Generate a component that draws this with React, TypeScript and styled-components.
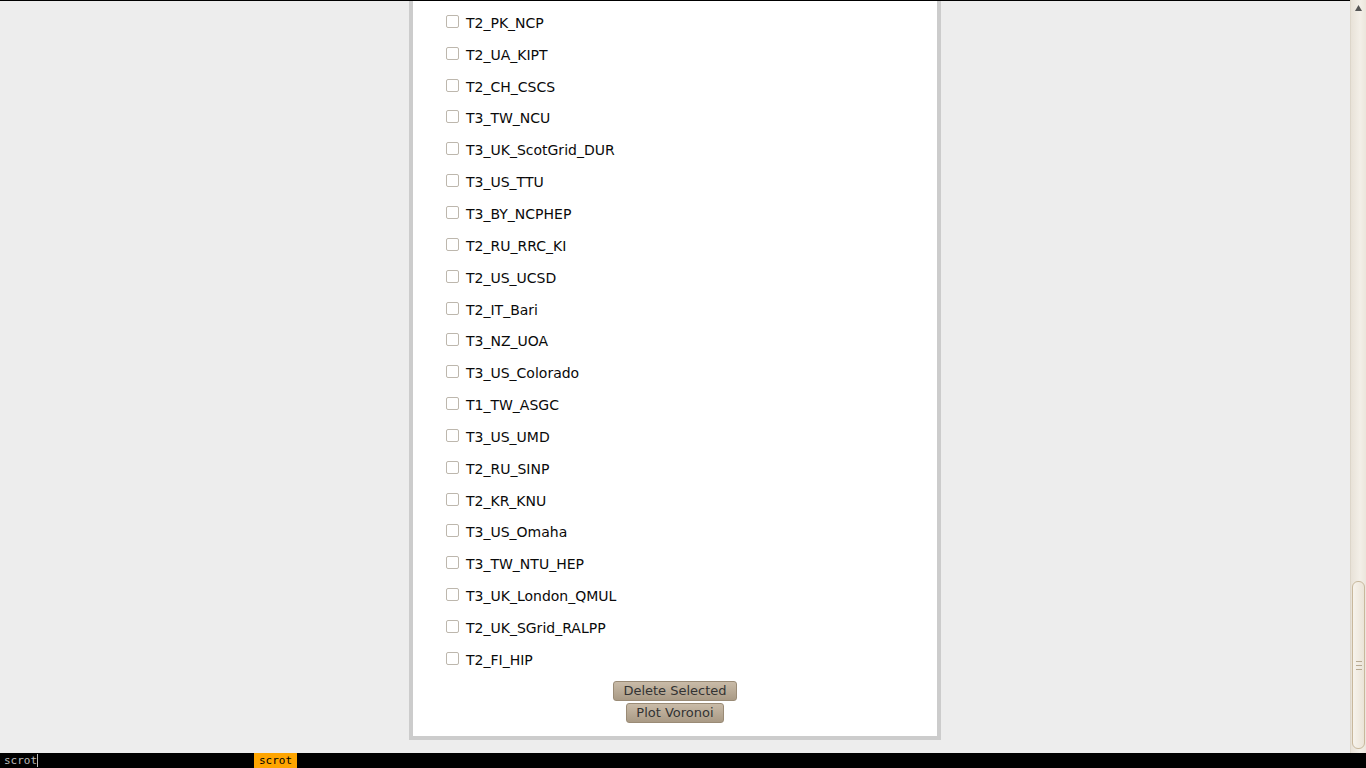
import React from "react";
import styled, { createGlobalStyle } from "styled-components";

const Global = createGlobalStyle`
  html, body { margin: 0; padding: 0; height: 100%; overflow: hidden; background: #ededed; }
  #root { height: 100%; }
`;

const sites = [
  "T2_PK_NCP","T2_UA_KIPT","T2_CH_CSCS","T3_TW_NCU","T3_UK_ScotGrid_DUR","T3_US_TTU",
  "T3_BY_NCPHEP","T2_RU_RRC_KI","T2_US_UCSD","T2_IT_Bari","T3_NZ_UOA","T3_US_Colorado",
  "T1_TW_ASGC","T3_US_UMD","T2_RU_SINP","T2_KR_KNU","T3_US_Omaha","T3_TW_NTU_HEP",
  "T3_UK_London_QMUL","T2_UK_SGrid_RALPP","T2_FI_HIP",
];

const Screen = styled.div`
  width: 1366px; height: 768px; display: flex; flex-direction: column; overflow: hidden;
`;
const Main = styled.div`
  flex: 1; display: flex; min-height: 0;
`;
const Viewport = styled.div`
  flex: 1; display: flex; flex-direction: column; border-top: 1px solid #000; background: #ededed; overflow: hidden;
`;
const Panel = styled.div`
  width: 524px; margin: 0 auto; background: #fff; border: 4px solid #ccc; border-top: none;
  padding: 6px 0 13px 0; display: flex; flex-direction: column;
  font-family: "DejaVu Sans", sans-serif; font-size: 14px; color: #0a0a0a;
`;
const Row = styled.label`
  height: 31.85px; display: flex; align-items: center; padding-left: 33px;
`;
const Box = styled.span`
  width: 11px; height: 11px; border: 1px solid #bdb7ad; border-radius: 2px; background: #fff;
  margin-right: 7px; margin-top: -3px; box-sizing: content-box;
`;
const Buttons = styled.div`
  display: flex; flex-direction: column; align-items: center; gap: 2px; margin-top: 5px;
`;
const Btn = styled.button`
  font-family: "DejaVu Sans", sans-serif; font-size: 13px; color: #333;
  background: linear-gradient(#c9bba8, #a99a85); border: 1px solid #9a8b76; border-radius: 3px;
  padding: 0 9px; height: 20px; line-height: 18px; cursor: pointer;
`;
const Scrollbar = styled.div`
  width: 16px; display: flex; flex-direction: column; background: linear-gradient(90deg, #e8e2d8, #f3efe8 60%, #ece6dc);
  border-left: 1px solid #ddd6ca; box-sizing: border-box;
`;
const Arrow = styled.div`
  height: 16px; display: flex; justify-content: center; align-items: center;
`;
const Track = styled.div`
  flex: 1; display: flex; flex-direction: column; justify-content: flex-end; padding-bottom: 4px;
`;
const Thumb = styled.div`
  height: 168px; margin: 0 0 0 1px; width: 13px; border: 1px solid #c8b89c; border-radius: 6px;
  background: linear-gradient(90deg, #f7f3ec, #ebe4d8); display: flex; align-items: center; justify-content: center;
  box-sizing: border-box;
`;
const Grip = styled.div`
  width: 6px; height: 7px; border-top: 1px solid #b8aa92; border-bottom: 1px solid #b8aa92; position: relative;
  &::after { content: ""; position: absolute; left: 0; right: 0; top: 3px; border-top: 1px solid #b8aa92; }
`;
const Status = styled.div`
  height: 15px; background: #000; display: flex; align-items: center;
  font-family: "DejaVu Sans Mono", monospace; font-size: 11px; color: #bbb;
`;
const Prompt = styled.div`
  width: 254px; padding-left: 4px; box-sizing: border-box; display: flex; align-items: center;
`;
const Cursor = styled.span`
  display: inline-block; width: 1px; height: 13px; background: #bbb;
`;
const Tag = styled.div`
  background: #ffa500; color: #000; width: 43px; text-align: center; height: 15px; line-height: 15px;
`;

export default function App() {
  return (
    <Screen>
      <Global />
      <Main>
        <Viewport>
          <Panel>
            {sites.map((s) => (
              <Row key={s}><Box />{s}</Row>
            ))}
            <Buttons>
              <Btn>Delete Selected</Btn>
              <Btn>Plot Voronoi</Btn>
            </Buttons>
          </Panel>
        </Viewport>
        <Scrollbar>
          <Arrow>
            <svg width="7" height="6" viewBox="0 0 7 6"><path d="M3.5 0 L7 6 L0 6 Z" fill="#555" /></svg>
          </Arrow>
          <Track>
            <Thumb><Grip /></Thumb>
          </Track>
        </Scrollbar>
      </Main>
      <Status>
        <Prompt>scrot<Cursor /></Prompt>
        <Tag>scrot</Tag>
      </Status>
    </Screen>
  );
}
